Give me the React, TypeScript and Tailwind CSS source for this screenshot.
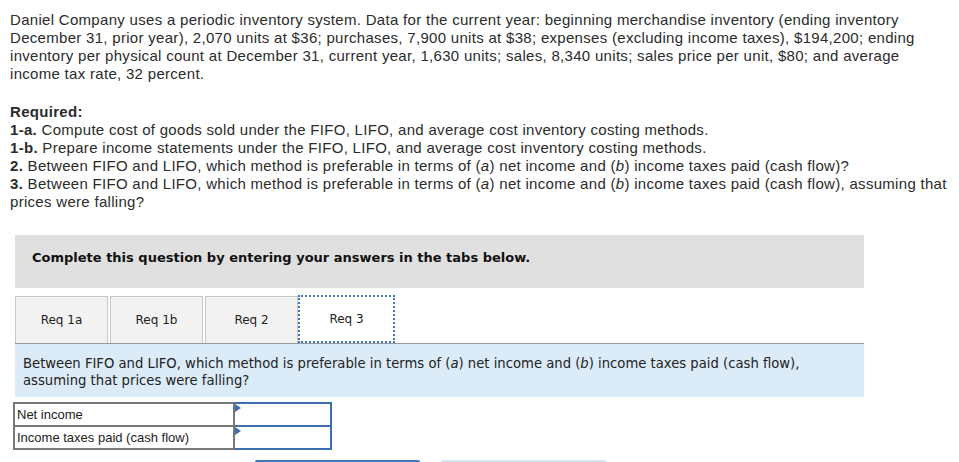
function InputCell() {
	return (
		<td className="relative w-[97px] border-2 border-[#3b6fb2] p-0">
			<span className="absolute left-0 top-0 h-0 w-0 border-y-[4px] border-l-[6px] border-y-transparent border-l-[#3b6fb2]" />
		</td>
	);
}

const tabs = ["Req 1a", "Req 1b", "Req 2", "Req 3"];

export default function App() {
	return (
		<div className="h-[462px] w-[959px] overflow-hidden bg-white text-[#2b2b2b]">
			<div className="px-[10px] pt-[11px] font-['Liberation_Sans',Arial,sans-serif] text-[15px] leading-[18px] tracking-[0.3px]">
				<p>
					<span className="block whitespace-nowrap">
						Daniel Company uses a periodic inventory system. Data for the current year: beginning merchandise inventory (ending inventory
					</span>
					<span className="block whitespace-nowrap">
						December 31, prior year), 2,070 units at $36; purchases, 7,900 units at $38; expenses (excluding income taxes), $194,200; ending
					</span>
					<span className="block whitespace-nowrap">
						inventory per physical count at December 31, current year, 1,630 units; sales, 8,340 units; sales price per unit, $80; and average
					</span>
					<span className="block whitespace-nowrap">income tax rate, 32 percent.</span>
				</p>
				<div className="mt-[20px]">
					<p className="font-bold">Required:</p>
					<p>
						<b>1-a.</b> Compute cost of goods sold under the FIFO, LIFO, and average cost inventory costing methods.
					</p>
					<p>
						<b>1-b.</b> Prepare income statements under the FIFO, LIFO, and average cost inventory costing methods.
					</p>
					<p>
						<b>2.</b> Between FIFO and LIFO, which method is preferable in terms of (<i>a</i>) net income and (<i>b</i>) income taxes paid (cash flow)?
					</p>
					<p>
						<span className="block whitespace-nowrap">
							<b>3.</b> Between FIFO and LIFO, which method is preferable in terms of (<i>a</i>) net income and (<i>b</i>) income taxes paid (cash flow), assuming that
						</span>
						<span className="block">prices were falling?</span>
					</p>
				</div>
			</div>

			<div className="ml-[15px] mt-[24px] w-[849px] font-['DejaVu_Sans',Verdana,sans-serif]">
				<div className="flex h-[53px] items-center bg-[#e0e0e0] pb-[8px] pl-[17px] text-[13px] font-bold text-[#111]">
					Complete this question by entering your answers in the tabs below.
				</div>

				<div className="mt-[7px] flex items-end gap-[2px] text-[12px] text-[#222]">
					{tabs.map((t, i) =>
						i === 3 ? (
							<div
								key={t}
								className="-ml-[2px] flex h-[48px] w-[97px] items-center justify-center border-2 border-dotted border-[#3d77c0] bg-white"
							>
								{t}
							</div>
						) : (
							<div
								key={t}
								className="flex h-[47px] w-[93px] items-center justify-center border border-b-0 border-[#c6c6c6] bg-[#f2f2f2]"
							>
								{t}
							</div>
						)
					)}
				</div>

				<div className="border-t border-[#9a9a9a] bg-[#dbebf8] px-[8px] pb-[8px] pt-[11px] text-[13.2px] leading-[17px] text-[#222]">
					Between FIFO and LIFO, which method is preferable in terms of (<i>a</i>) net income and (<i>b</i>) income taxes paid (cash flow),
					<br />
					assuming that prices were falling?
				</div>
			</div>

			<table className="ml-[13px] mt-[5px] border-collapse font-['Liberation_Sans',Arial,sans-serif] text-[13px] text-[#222]">
				<tbody>
					<tr className="h-[23px]">
						<td className="w-[220px] border-2 border-[#777] px-[2px] py-0 leading-[16px]">Net income</td>
						<InputCell />
					</tr>
					<tr className="h-[23px]">
						<td className="w-[220px] border-2 border-[#777] px-[2px] py-0 leading-[16px]">Income taxes paid (cash flow)</td>
						<InputCell />
					</tr>
				</tbody>
			</table>

			<div className="mt-[10px] flex gap-[21px] pl-[255px]">
				<div className="h-[10px] w-[165px] rounded-t-[2px] bg-[#3a76bb]" />
				<div className="h-[10px] w-[165px] rounded-t-[2px] bg-[#d6e3f1]" />
			</div>
		</div>
	);
}
